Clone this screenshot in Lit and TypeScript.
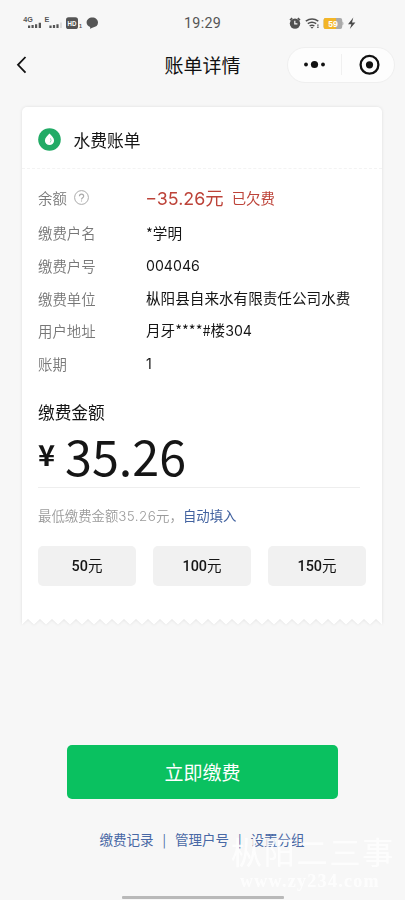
import { LitElement, html, css } from "lit";
import { customElement } from "lit/decorators.js";

const ROWS: [string, string][] = [
  ["缴费户名", "*学明"],
  ["缴费户号", "004046"],
  ["缴费单位", "枞阳县自来水有限责任公司水费"],
  ["用户地址", "月牙****#楼304"],
  ["账期", "1"],
];
const AMOUNTS = ["50", "100", "150"];
const LINKS = ["缴费记录", "管理户号", "设置分组"];

// Torn lower edge of the receipt: 30 teeth, each 12px wide.
const TEETH = Array.from({ length: 30 }, (_, i) => `L${i * 12 + 6} 1L${i * 12 + 12} 6.5`).join("");

// Wraps runs of digits so that they take the numeral face.
const withDigits = (s: string) =>
  s.split(/(−?[\d.]+)/).map((part) => (/^−?\d/.test(part) ? html`<span class="num">${part}</span>` : part));

@customElement("status-bar")
class StatusBar extends LitElement {
  static styles = css`
    :host { display: block; height: 46px; }
    .bar { display: grid; grid-template-columns: 1fr auto 1fr; height: 46px; align-items: center; }
    .time { font: 400 14.3px/20px Roboto, Inter, sans-serif; color: #555; letter-spacing: 0.3px; width: 37px; }
    svg { display: block; }
    .left { padding-left: 22px; }
    .right { padding-left: 67px; }
    text { font-family: "Liberation Sans", sans-serif; font-weight: 700; }
  `;
  render() {
    return html`<div class="bar">
      <div class="left">
        <svg width="80" height="18" viewBox="22 14 80 18">
          <g fill="#555">
            <text x="23.3" y="22.4" font-size="7.2">4G</text>
            <text x="44.6" y="22.4" font-size="7.2">E</text>
            <path d="M28 25.6h2.2V28H28zM31.5 25.1h2.2V28h-2.2zM35 24.2h2.2V28H35zM38.7 22.7h2.3V28h-2.3zM49.4 25.6h2.2V28h-2.2zM52.9 25.1h2.2V28h-2.2zM56.4 24.2h2.2V28h-2.2z" />
            <path d="M60 22.5h2V28h-2z" fill="#ddd" />
            <rect x="66" y="17.3" width="12" height="11.8" rx="2.6" />
            <text x="79" y="28.4" font-size="5.5">1</text>
            <path d="M92.3 17.6c3.2 0 5.7 2.1 5.7 5 0 2.8-2.1 4.6-5 4.8l-3 1.3.2-1.7c-2.2-.7-3.6-2.3-3.6-4.4 0-2.9 2.5-5 5.7-5z" />
          </g>
          <text x="67.6" y="26.2" font-size="7.8" textLength="8.8" lengthAdjust="spacingAndGlyphs" fill="#fff">HD</text>
        </svg>
      </div>
      <div class="time">19:29</div>
      <div class="right">
        <svg width="70" height="18" viewBox="288 14 70 18">
          <circle cx="295" cy="23.6" r="5.2" fill="#505050" />
          <path d="M290 20.2l2.2-2M300 20.2l-2.2-2" stroke="#505050" stroke-width="1.6" />
          <path d="M294.8 20.8v3h2.6" fill="none" stroke="#f7f7f7" stroke-width="1.2" />
          <g fill="none" stroke="#505050" stroke-width="1.5">
            <path d="M305.8 21.2q6.3-4.4 12.5 0M307.8 23.7q4.2-2.9 8.4 0M309.6 26q2.4-1.6 4.8 0" />
          </g>
          <path d="M310.5 27l1.5 1.8 1.5-1.8zM317.2 24.5h1.4v1.3h-1.4zM317.2 26.6h1.4v1.5h-1.4z" fill="#505050" />
          <rect x="323.6" y="18" width="18.6" height="11" rx="2" fill="#aaa" />
          <path d="M325.6 18H336v11h-10.4a2 2 0 0 1-2-2v-7a2 2 0 0 1 2-2z" fill="#f3b526" />
          <path d="M342.3 21.5c1.5.2 1.5 3.8 0 4z" fill="#aaa" />
          <text x="328.3" y="26.6" font-size="8.5" fill="#fff">59</text>
          <path d="M353.3 17.5l-5.3 6.7h3.4l-1.6 4.8 5.6-6.4H352z" fill="#4b4b4b" />
        </svg>
      </div>
    </div>`;
  }
}

@customElement("nav-bar")
class NavBar extends LitElement {
  static styles = css`
    :host { display: block; }
    .nav { display: grid; grid-template-columns: 1fr auto 1fr; align-items: center; height: 37px; padding: 0 10px; }
    .title { font-size: 19px; line-height: 28px; color: #111; }
    .back { margin-left: 4px; }
    .capsule { justify-self: end; display: flex; align-items: center; box-sizing: border-box; width: 108px; height: 36px; border: 1px solid #efefef; border-radius: 18px; background: #fdfdfd; }
    .half { flex: 1; display: flex; justify-content: center; }
    .rule { width: 1px; height: 21px; background: #f0f0f0; }
    svg { display: block; }
  `;
  render() {
    return html`<div class="nav">
      <svg class="back" width="16" height="20" viewBox="0 0 16 20"><path d="M11.5 2L4 9.8l7.5 7.8" fill="none" stroke="#111" stroke-width="1.8" /></svg>
      <div class="title">账单详情</div>
      <div class="capsule">
        <div class="half"><svg width="24" height="10" viewBox="0 0 24 10" fill="#111"><circle cx="4" cy="4.5" r="1.9" /><circle cx="12.5" cy="4.5" r="3.6" /><circle cx="21" cy="4.5" r="1.9" /></svg></div>
        <div class="rule"></div>
        <div class="half"><svg width="24" height="22" viewBox="0 0 24 22"><circle cx="13.5" cy="10.8" r="8.9" fill="none" stroke="#111" stroke-width="2.3" /><circle cx="13.5" cy="10.8" r="3.6" fill="#111" /></svg></div>
      </div>
    </div>`;
  }
}

@customElement("bill-card")
class BillCard extends LitElement {
  static styles = css`
    :host { display: block; filter: drop-shadow(0 0.5px 1.5px rgba(0, 0, 0, 0.1)); }
    .card { background: #fff; border-radius: 5px 5px 0 0; height: 511px; box-sizing: border-box; color: #151515; }
    .head { display: flex; align-items: center; height: 62px; padding: 4px 16px 0; box-sizing: border-box; border-bottom: 1px dashed #f3f3f3; gap: 12.5px; }
    .head span { font-size: 16.8px; line-height: 24px; padding-top: 1px; }
    svg { display: block; }
    .body { padding: 11px 16px 0; }
    .row { display: flex; align-items: center; height: 32.7px; font-size: 14.6px; }
    .row.balance { height: 35px; margin-bottom: 1.5px; }
    .label { width: 108px; flex: none; color: #777; font-size: 14.4px; display: flex; align-items: center; gap: 7px; font-weight: 350; }
    .value { white-space: nowrap; line-height: 22px; }
    .num { font-family: Inter, "Noto Sans CJK SC", sans-serif; font-size: 0.97em; }
    .debt { color: #bd4339; font-size: 18.4px; display: flex; align-items: center; gap: 8px; margin-left: -0.8px; }
    .debt small { font-size: 14.4px; }
    .subtitle { font-size: 16.7px; line-height: 24px; margin-top: 20.5px; }
    .amount { display: flex; height: 64px; box-sizing: border-box; border-bottom: 1px solid #eee; margin-right: 6px; align-items: center; }
    .yen { font-size: 29px; font-weight: 700; width: 27px; line-height: 40px; margin-top: -6px; }
    .sum { font-size: 48.5px; line-height: 60px; margin-top: -2px; }
    .hint { font-size: 13.4px; line-height: 20px; margin-top: 17px; color: #9b9b9b; white-space: nowrap; font-weight: 350; }
    .hint .num { letter-spacing: 0.4px; font-size: 1em; }
    .hint a { color: #4363a0; font-weight: 400; }
    .choices { display: grid; grid-template-columns: repeat(3, 98px); gap: 17px; margin-top: 19.4px; }
    .choice { display: flex; align-items: baseline; justify-content: center; line-height: 38.5px; height: 40px; border-radius: 5px; background: #f1f1f1; font-size: 14.5px; }
    .choice b { font-family: Roboto, sans-serif; font-weight: 500; font-size: 14.4px; }
  `;
  render() {
    return html`<div class="card">
        <div class="head">
          <svg width="23" height="23" viewBox="0 0 23 23"><circle cx="11.5" cy="11.5" r="11.3" fill="#22ab66" /><path d="M11.5 5.5c1.8 2 4.6 4.3 4.6 7a4.6 4.6 0 0 1-9.2 0c0-2.700 2.800-5 4.600-7z" fill="#fff" /><path d="M12.5 10.3q1.3 2.2-.3 4.2" fill="none" stroke="#7ccda4" stroke-width=".8" /></svg>
          <span>水费账单</span>
        </div>
        <div class="body">
          <div class="row balance">
            <div class="label">余额<svg width="15" height="15" viewBox="0 0 15 15" fill="none" stroke="#aaa"><circle cx="7.5" cy="7.5" r="6.9" /><path d="M5.4 6.2c0-2.8 4.3-2.8 4.3 0 0 1.5-2.2 1.6-2.2 3.3M7.5 10.4v1.2" stroke-width="1.1" /></svg></div>
            <div class="value debt"><span>${withDigits("−35.26元")}</span><small>已欠费</small></div>
          </div>
          ${ROWS.map(([k, v]) => html`<div class="row"><div class="label">${k}</div><div class="value">${withDigits(v)}</div></div>`)}
          <div class="subtitle">缴费金额</div>
          <div class="amount"><span class="yen">¥</span><span class="sum">35.26</span></div>
          <div class="hint">${withDigits("最低缴费金额35.26元，")}<a>自动填入</a></div>
          <div class="choices">${AMOUNTS.map((a) => html`<div class="choice"><b>${a}</b>元</div>`)}</div>
        </div>
      </div>
      <svg width="360" height="7" viewBox="0 0 360 7"><path d=${`M0 0V6.5${TEETH}V0Z`} fill="#fff" /></svg>`;
  }
}

@customElement("app-root")
class AppRoot extends LitElement {
  static styles = css`
    :host { display: block; position: relative; width: 405px; height: 900px; overflow: hidden; background: #f7f7f7; font-family: "Noto Sans CJK SC", sans-serif; }
    .page { display: flex; flex-direction: column; height: 900px; }
    bill-card { margin: 24px 23px 0 22px; height: 518px; }
    .pay { margin: 119.5px 67px 0; height: 54px; border-radius: 5px; background: #0ac160; color: #fff; display: flex; align-items: center; justify-content: center; font-size: 19px; }
    .links { display: flex; justify-content: center; align-items: center; margin-top: 30.5px; height: 20px; font-size: 13.5px; color: #4868a5; padding-right: 1px; }
    .sep { width: 21.5px; text-align: center; font-size: 13px; }
    .home { margin: auto 121.5px 1px; height: 3px; border-radius: 1px; background: #b9b9b9; }
    .mark { position: absolute; left: 231px; top: 832px; width: 170px; color: #fff; opacity: 0.85; }
    .mark-name { font-size: 31px; line-height: 38px; white-space: nowrap; letter-spacing: 1.8px; }
    .mark-url { font: 700 18px/20px "Liberation Serif", serif; padding: 1px 0 0 9px; letter-spacing: 1.3px; }
  `;
  render() {
    return html`<div class="page">
        <status-bar></status-bar>
        <nav-bar></nav-bar>
        <bill-card></bill-card>
        <div class="pay">立即缴费</div>
        <div class="links">${LINKS.map((l, i) => html`${i ? html`<span class="sep">|</span>` : ""}<span>${l}</span>`)}</div>
        <div class="home"></div>
      </div>
      <div class="mark"><div class="mark-name">枞阳二三事</div><div class="mark-url">www.zy234.com</div></div>`;
  }
}
